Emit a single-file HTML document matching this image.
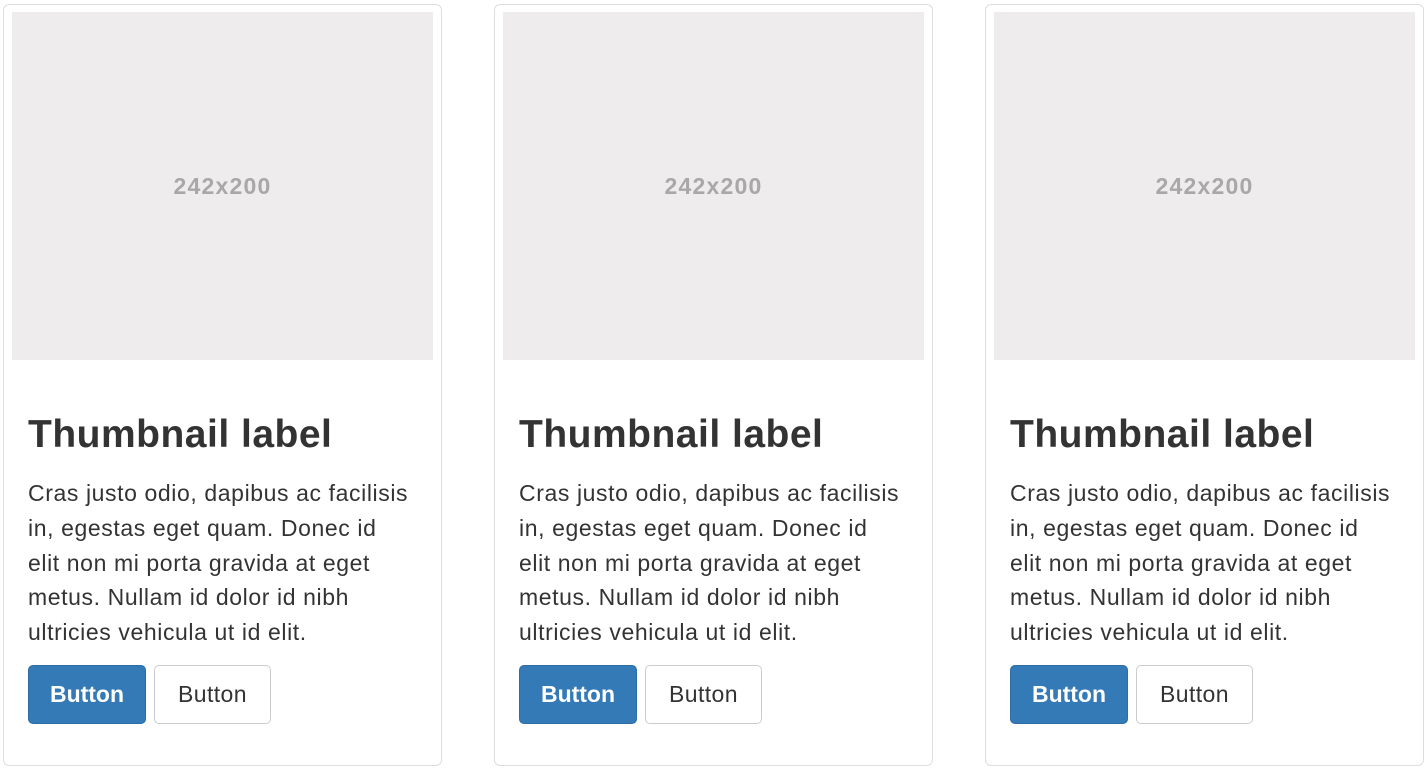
<!DOCTYPE html>
<html><head><style>
body{margin:0;width:1425px;height:769px;background:#fff;font-family:"Liberation Sans",Arial,sans-serif;position:relative;overflow:hidden}
.card{position:absolute;top:4px;width:439px;height:762px;border:1.5px solid #ddd;border-radius:6px;box-sizing:border-box}
.img{position:absolute;left:8px;top:7px;width:421px;height:348px;background:#eeeced;display:flex;align-items:center;justify-content:center;color:#a8a8a8;font-weight:bold;font-size:23px;letter-spacing:1.2px}
h3{position:absolute;left:24px;top:408px;margin:0;font-size:39px;font-weight:bold;color:#333;letter-spacing:0.5px}
p{position:absolute;left:24px;top:471px;width:410px;margin:0;font-size:23px;line-height:34.8px;color:#333;white-space:nowrap;letter-spacing:0.6px}
.b{position:absolute;top:660px;height:59px;box-sizing:border-box;border-radius:5px;font-size:23px;display:flex;align-items:center;justify-content:center}
.p{left:24px;width:118px;background:#337ab7;color:#fff;border:1px solid #2e6da4;font-weight:bold}
.d{left:150px;width:117px;background:#fff;color:#333;border:1.5px solid #ccc;letter-spacing:0.4px}
</style></head><body>
<div class="card" style="left:3px"><div class="img">242x200</div><h3>Thumbnail label</h3><p>Cras justo odio, dapibus ac facilisis<br>in, egestas eget quam. Donec id<br>elit non mi porta gravida at eget<br>metus. Nullam id dolor id nibh<br>ultricies vehicula ut id elit.</p><div class="b p">Button</div><div class="b d">Button</div></div>
<div class="card" style="left:494px"><div class="img">242x200</div><h3>Thumbnail label</h3><p>Cras justo odio, dapibus ac facilisis<br>in, egestas eget quam. Donec id<br>elit non mi porta gravida at eget<br>metus. Nullam id dolor id nibh<br>ultricies vehicula ut id elit.</p><div class="b p">Button</div><div class="b d">Button</div></div>
<div class="card" style="left:985px"><div class="img">242x200</div><h3>Thumbnail label</h3><p>Cras justo odio, dapibus ac facilisis<br>in, egestas eget quam. Donec id<br>elit non mi porta gravida at eget<br>metus. Nullam id dolor id nibh<br>ultricies vehicula ut id elit.</p><div class="b p">Button</div><div class="b d">Button</div></div>
</body></html>
